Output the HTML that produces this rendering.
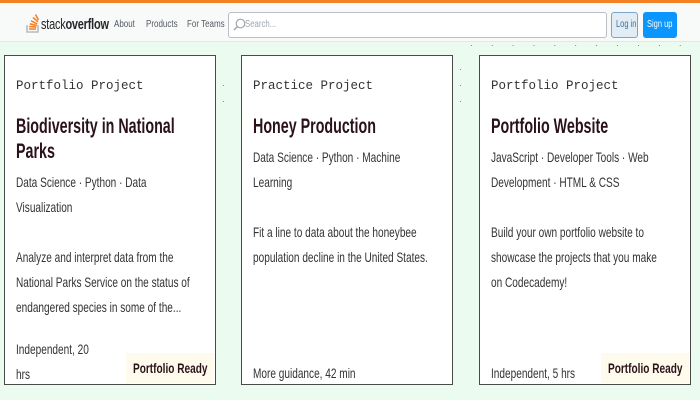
<!DOCTYPE html>
<html><head><style>
*{margin:0;padding:0;box-sizing:border-box}
body{width:700px;height:400px;overflow:hidden;background:#ebfbf0;font-family:"Liberation Sans",sans-serif;position:relative}
.s{display:block;white-space:nowrap;transform-origin:0 0}
.top{position:absolute;left:0;top:0;width:700px;height:3px;background:#f48024}
.hdr{position:absolute;left:0;top:3px;width:700px;height:39px;background:#f8f9f9;border-bottom:1px solid #e4e6e8;overflow:hidden}
.logo{position:absolute;left:26px;top:9px}
.lt{position:absolute;left:41px;top:13px;font-size:15px;color:#242729;letter-spacing:-0.3px;transform:scaleX(.73);transform-origin:0 0;white-space:nowrap}
.nav{position:absolute;top:16px;font-size:10px;color:#535a60;transform:scaleX(.8);transform-origin:0 0;white-space:nowrap}
.search{position:absolute;left:228px;top:9px;width:379px;height:26px;background:#fff;border:1px solid #babfc4;border-radius:3px;font-size:10px;color:#9fa6ad;overflow:hidden}
.login{position:absolute;left:611px;top:9px;width:27px;height:26px;background:#e1ecf4;border:1px solid #7aa7c7;border-radius:3px;font-size:10px;color:#39739d;line-height:24px;overflow:hidden}
.signup{position:absolute;left:643px;top:9px;width:34px;height:26px;background:#0a95ff;border-radius:3px;font-size:10px;color:#fff;line-height:26px;overflow:hidden}
.card{position:absolute;top:55px;width:212px;height:330px;background:#fff;border:1px solid #4a4a4a;overflow:hidden}
.kind{position:absolute;top:23px;left:11px;font-family:"Liberation Mono",monospace;font-size:12.5px;color:#333;white-space:nowrap}
.title{position:absolute;top:58px;left:11px;font-size:21px;font-weight:bold;color:#2a1219;line-height:25px}
.title .s{transform:scaleX(.68)}
.tx{position:absolute;left:11px;font-size:14px;color:#333;line-height:25px}
.tx .s{transform:scaleX(.72)}
.badge{position:absolute;right:1px;bottom:1px;background:#fffbec;width:88px;height:30px;line-height:30px;font-size:14px;font-weight:bold;color:#2a1219;padding-left:7px;overflow:hidden}
.badge .s{transform:scaleX(.72)}
.dots{position:absolute;font-size:8px;color:#555;letter-spacing:8px;white-space:nowrap;overflow:hidden}
</style></head><body>
<div class="top"></div>
<div class="hdr">
<svg class="logo" width="14" height="22" viewBox="0 0 14 22"><path d="M1 13v7h11v-7" fill="none" stroke="#bcbbbb" stroke-width="1.6"/><path d="M3 17h7M3.2 14.5l7 .6M3.8 11.8l6.8 1.8M5 8.8l6.2 3.2M7 5.5l5 4.3M9.5 2.5l3 5.5" stroke="#f48024" stroke-width="1.6"/></svg>
<div class="lt">stack<b>overflow</b></div>
<div class="nav" style="left:114px">About</div>
<div class="nav" style="left:146px">Products</div>
<div class="nav" style="left:187px">For Teams</div>
<div class="search"><svg style="position:absolute;left:4px;top:5px" width="13" height="13" viewBox="0 0 13 13"><circle cx="7.5" cy="5.5" r="4.3" fill="none" stroke="#9fa6ad" stroke-width="1.2"/><path d="M4.5 8.5L1 12" stroke="#9fa6ad" stroke-width="1.4"/></svg><span class="s" style="position:absolute;left:16px;top:6px;transform:scaleX(.78)">Search...</span></div>
<div class="login"><span class="s" style="position:absolute;left:4px;transform:scaleX(.75)">Log in</span></div>
<div class="signup"><span class="s" style="position:absolute;left:4px;transform:scaleX(.75)">Sign up</span></div>
</div>
<div class="dots" style="left:470px;top:41px;width:230px">· · · · · · · · · · · · · · · · · · · · · · ·</div>
<div class="dots" style="left:222px;top:78px;line-height:16px">· ·<br>· ·</div>
<div class="dots" style="left:459px;top:62px;line-height:16px">·<br>· ·<br>· ·</div>

<div class="card" style="left:4px">
<div class="kind">Portfolio Project</div>
<div class="title"><span class="s">Biodiversity in National</span><span class="s">Parks</span></div>
<div class="tx" style="top:114px"><span class="s">Data Science · Python · Data</span><span class="s">Visualization</span></div>
<div class="tx" style="top:189px"><span class="s">Analyze and interpret data from the</span><span class="s">National Parks Service on the status of</span><span class="s">endangered species in some of the...</span></div>
<div class="tx" style="top:281px"><span class="s">Independent, 20</span><span class="s">hrs</span></div>
<div class="badge"><span class="s">Portfolio Ready</span></div>
</div>

<div class="card" style="left:241px">
<div class="kind">Practice Project</div>
<div class="title"><span class="s">Honey Production</span></div>
<div class="tx" style="top:89px"><span class="s">Data Science · Python · Machine</span><span class="s">Learning</span></div>
<div class="tx" style="top:164px"><span class="s">Fit a line to data about the honeybee</span><span class="s">population decline in the United States.</span></div>
<div class="tx" style="top:305px"><span class="s">More guidance, 42 min</span></div>
</div>

<div class="card" style="left:479px">
<div class="kind">Portfolio Project</div>
<div class="title"><span class="s">Portfolio Website</span></div>
<div class="tx" style="top:89px"><span class="s">JavaScript · Developer Tools · Web</span><span class="s">Development · HTML &amp; CSS</span></div>
<div class="tx" style="top:164px"><span class="s">Build your own portfolio website to</span><span class="s">showcase the projects that you make</span><span class="s">on Codecademy!</span></div>
<div class="tx" style="top:305px"><span class="s">Independent, 5 hrs</span></div>
<div class="badge"><span class="s">Portfolio Ready</span></div>
</div>
</body></html>
